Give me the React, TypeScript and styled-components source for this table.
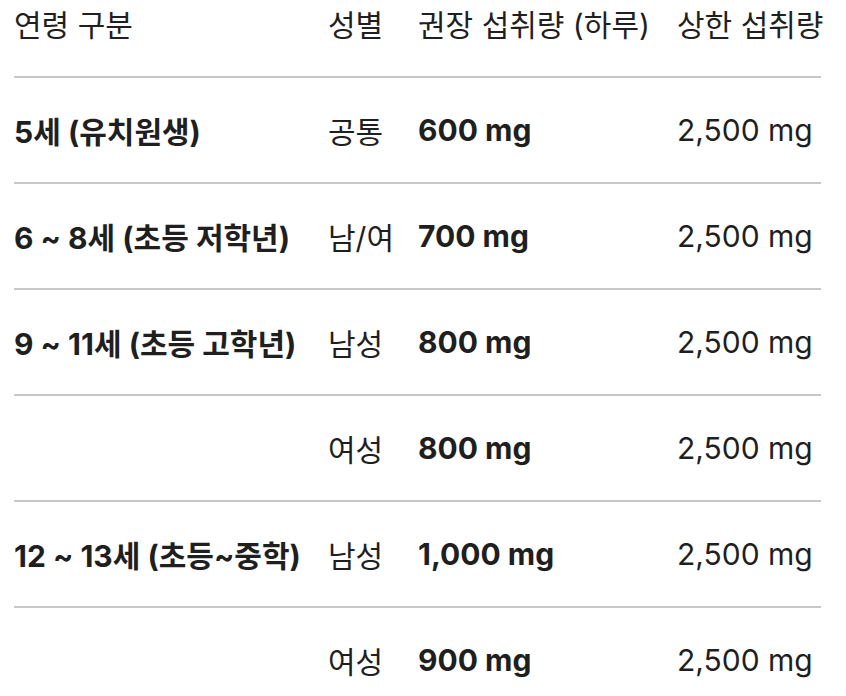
import React from 'react';
import styled, { createGlobalStyle } from 'styled-components';

const GlobalStyle = createGlobalStyle`
  html, body {
    margin: 0;
    padding: 0;
    background: #ffffff;
  }
  body {
    font-family: 'Inter', 'Noto Sans CJK KR', sans-serif;
    color: #1f1f1f;
  }
`;

const Wrapper = styled.div`
  padding: 0 0 0 14px;
  overflow: hidden;
`;

const Table = styled.table`
  width: 807px;
  border-collapse: collapse;
  table-layout: fixed;
  font-size: 30px;
`;

const HeadCell = styled.th`
  padding: 0 0 26px;
  height: 50px;
  line-height: 50px;
  text-align: left;
  font-weight: 400;
  white-space: nowrap;
  border-bottom: 2px solid #c8c8c8;
`;

const Row = styled.tr<{ $last?: boolean }>`
  border-bottom: ${p => (p.$last ? 'none' : '2px solid #c8c8c8')};
`;

const Cell = styled.td<{ $bold?: boolean }>`
  padding: 0;
  height: 104px;
  vertical-align: middle;
  white-space: nowrap;
  font-weight: ${p => (p.$bold ? 700 : 400)};
`;

const rows = [
  { age: '5세 (유치원생)', sex: '공통', rec: '600 mg', max: '2,500 mg' },
  { age: '6 ~ 8세 (초등 저학년)', sex: '남/여', rec: '700 mg', max: '2,500 mg' },
  { age: '9 ~ 11세 (초등 고학년)', sex: '남성', rec: '800 mg', max: '2,500 mg' },
  { age: '', sex: '여성', rec: '800 mg', max: '2,500 mg' },
  { age: '12 ~ 13세 (초등~중학)', sex: '남성', rec: '1,000 mg', max: '2,500 mg' },
  { age: '', sex: '여성', rec: '900 mg', max: '2,500 mg' },
];

const App: React.FC = () => {
  return (
    <Wrapper>
      <GlobalStyle />
      <Table>
        <colgroup>
          <col style={{ width: 314 }} />
          <col style={{ width: 90 }} />
          <col style={{ width: 259 }} />
          <col style={{ width: 144 }} />
        </colgroup>
        <thead>
          <tr>
            <HeadCell>연령 구분</HeadCell>
            <HeadCell>성별</HeadCell>
            <HeadCell>권장 섭취량 (하루)</HeadCell>
            <HeadCell>상한 섭취량</HeadCell>
          </tr>
        </thead>
        <tbody>
          {rows.map((r, i) => (
            <Row key={i} $last={i === rows.length - 1}>
              <Cell $bold>{r.age}</Cell>
              <Cell>{r.sex}</Cell>
              <Cell $bold>{r.rec}</Cell>
              <Cell>{r.max}</Cell>
            </Row>
          ))}
        </tbody>
      </Table>
    </Wrapper>
  );
};

export default App;
